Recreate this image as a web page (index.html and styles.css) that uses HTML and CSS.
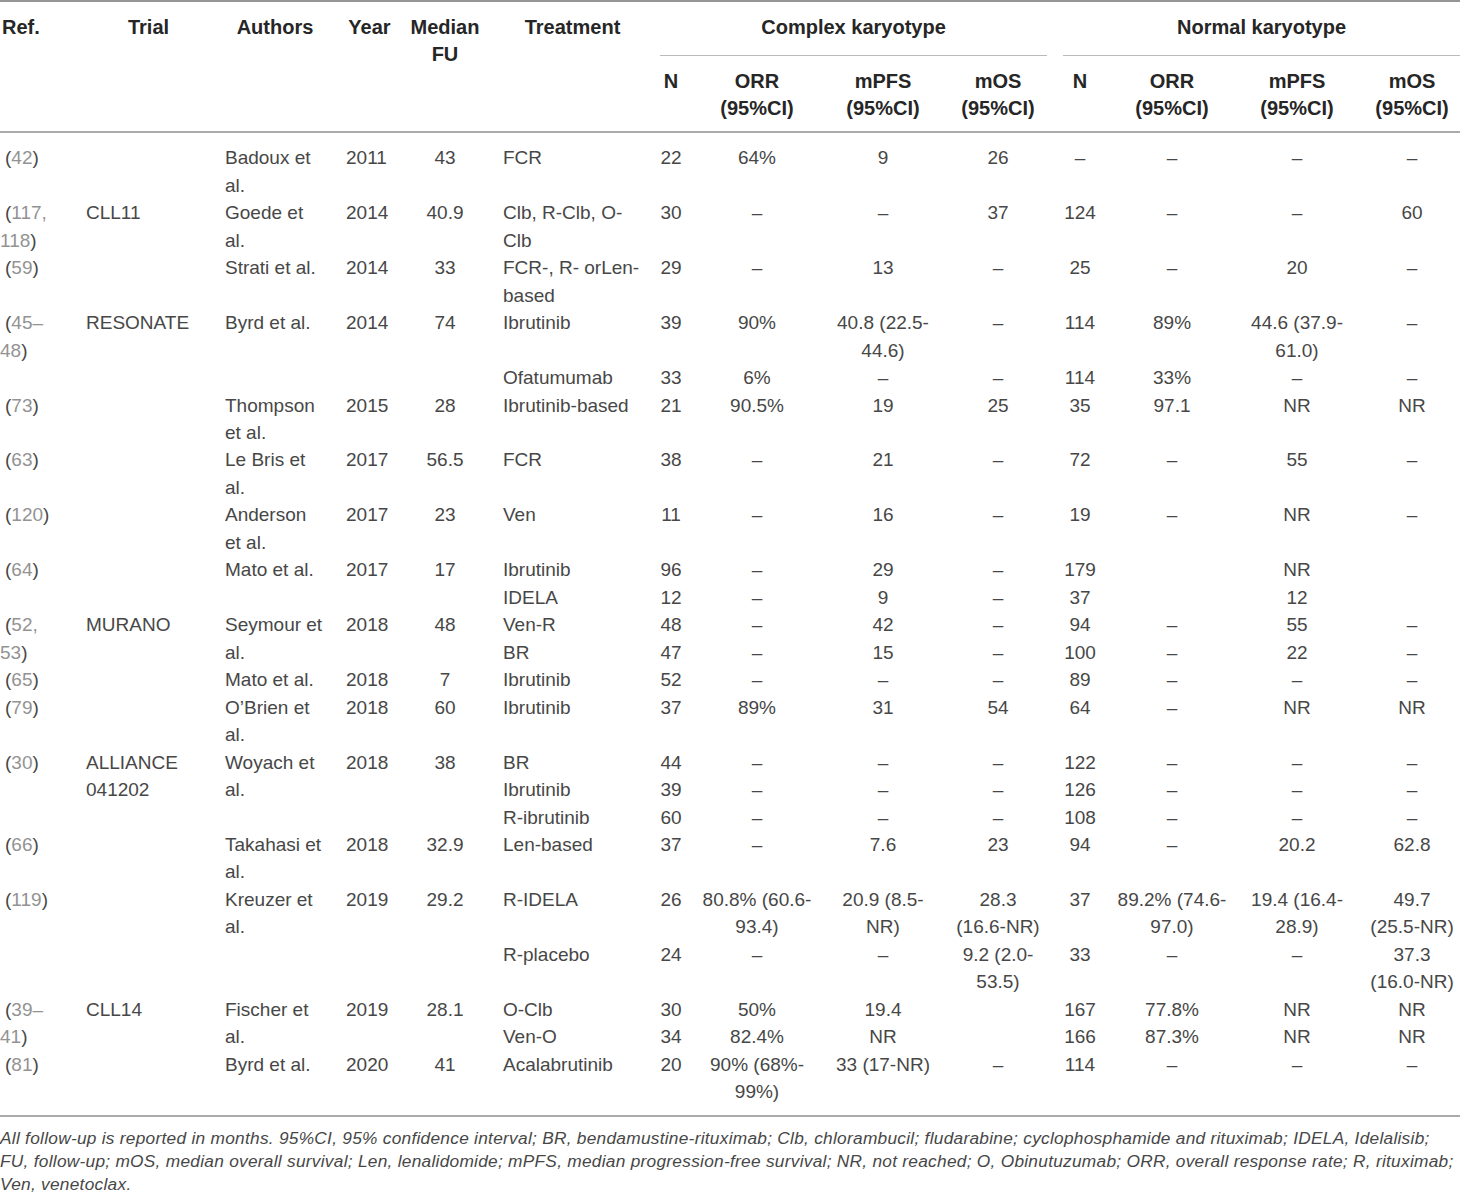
FILE: index.html
```html
<!DOCTYPE html>
<html lang="en">
<head>
<meta charset="utf-8">
<title>Complex karyotype outcomes</title>
<link rel="stylesheet" href="styles.css">
</head>
<body>
<div class="wrap">
<table class="data">
<colgroup>
<col class="w-ref"><col class="w-trial"><col class="w-auth"><col class="w-yr"><col class="w-fu"><col class="w-tx">
<col class="w-n"><col class="w-orr"><col class="w-pfs"><col class="w-os">
<col class="w-n2"><col class="w-orr2"><col class="w-pfs2"><col class="w-os2">
</colgroup>
<thead>
<tr class="h1">
<th rowspan="2" class="ref">Ref.</th>
<th rowspan="2" class="trial">Trial</th>
<th rowspan="2" class="auth">Authors</th>
<th rowspan="2" class="yr">Year</th>
<th rowspan="2">Median FU</th>
<th rowspan="2" class="tx">Treatment</th>
<th colspan="4" class="grp"><div class="grp-line cx">Complex karyotype</div></th>
<th colspan="4" class="grp"><div class="grp-line nk">Normal karyotype</div></th>
</tr>
<tr class="h2">
<th>N</th><th>ORR (95%CI)</th><th>mPFS (95%CI)</th><th class="os">mOS (95%CI)</th>
<th>N</th><th>ORR (95%CI)</th><th>mPFS (95%CI)</th><th class="os2">mOS (95%CI)</th>
</tr>
</thead>
<tbody>
<tr class="first">
<td class="ref">(<span class="lk">42</span>)</td><td class="trial"></td><td class="auth">Badoux et al.</td><td class="yr">2011</td><td>43</td><td class="tx">FCR</td>
<td>22</td><td>64%</td><td>9</td><td class="os">26</td><td>–</td><td>–</td><td>–</td><td class="os2">–</td>
</tr>
<tr>
<td class="ref">(<span class="lk">117,</span> <span class="lk">118</span>)</td><td class="trial">CLL11</td><td class="auth">Goede et al.</td><td class="yr">2014</td><td>40.9</td><td class="tx">Clb, R-Clb, O-Clb</td>
<td>30</td><td>–</td><td>–</td><td class="os">37</td><td>124</td><td>–</td><td>–</td><td class="os2">60</td>
</tr>
<tr>
<td class="ref">(<span class="lk">59</span>)</td><td class="trial"></td><td class="auth">Strati et al.</td><td class="yr">2014</td><td>33</td><td class="tx">FCR-, R- orLen-based</td>
<td>29</td><td>–</td><td>13</td><td class="os">–</td><td>25</td><td>–</td><td>20</td><td class="os2">–</td>
</tr>
<tr>
<td rowspan="2" class="ref">(<span class="lk">45–</span><wbr><span class="lk">48</span>)</td><td rowspan="2" class="trial">RESONATE</td><td rowspan="2" class="auth">Byrd et al.</td><td rowspan="2" class="yr">2014</td><td rowspan="2">74</td><td class="tx">Ibrutinib</td>
<td>39</td><td>90%</td><td>40.8 (22.5-44.6)</td><td class="os">–</td><td>114</td><td>89%</td><td>44.6 (37.9-61.0)</td><td class="os2">–</td>
</tr>
<tr>
<td class="tx">Ofatumumab</td>
<td>33</td><td>6%</td><td>–</td><td class="os">–</td><td>114</td><td>33%</td><td>–</td><td class="os2">–</td>
</tr>
<tr>
<td class="ref">(<span class="lk">73</span>)</td><td class="trial"></td><td class="auth">Thompson et al.</td><td class="yr">2015</td><td>28</td><td class="tx">Ibrutinib-based</td>
<td>21</td><td>90.5%</td><td>19</td><td class="os">25</td><td>35</td><td>97.1</td><td>NR</td><td class="os2">NR</td>
</tr>
<tr>
<td class="ref">(<span class="lk">63</span>)</td><td class="trial"></td><td class="auth">Le Bris et al.</td><td class="yr">2017</td><td>56.5</td><td class="tx">FCR</td>
<td>38</td><td>–</td><td>21</td><td class="os">–</td><td>72</td><td>–</td><td>55</td><td class="os2">–</td>
</tr>
<tr>
<td class="ref">(<span class="lk">120</span>)</td><td class="trial"></td><td class="auth">Anderson et al.</td><td class="yr">2017</td><td>23</td><td class="tx">Ven</td>
<td>11</td><td>–</td><td>16</td><td class="os">–</td><td>19</td><td>–</td><td>NR</td><td class="os2">–</td>
</tr>
<tr>
<td rowspan="2" class="ref">(<span class="lk">64</span>)</td><td rowspan="2" class="trial"></td><td rowspan="2" class="auth">Mato et al.</td><td rowspan="2" class="yr">2017</td><td rowspan="2">17</td><td class="tx">Ibrutinib</td>
<td>96</td><td>–</td><td>29</td><td class="os">–</td><td>179</td><td></td><td>NR</td><td class="os2"></td>
</tr>
<tr>
<td class="tx">IDELA</td>
<td>12</td><td>–</td><td>9</td><td class="os">–</td><td>37</td><td></td><td>12</td><td class="os2"></td>
</tr>
<tr>
<td rowspan="2" class="ref">(<span class="lk">52,</span> <span class="lk">53</span>)</td><td rowspan="2" class="trial">MURANO</td><td rowspan="2" class="auth">Seymour et al.</td><td rowspan="2" class="yr">2018</td><td rowspan="2">48</td><td class="tx">Ven-R</td>
<td>48</td><td>–</td><td>42</td><td class="os">–</td><td>94</td><td>–</td><td>55</td><td class="os2">–</td>
</tr>
<tr>
<td class="tx">BR</td>
<td>47</td><td>–</td><td>15</td><td class="os">–</td><td>100</td><td>–</td><td>22</td><td class="os2">–</td>
</tr>
<tr>
<td class="ref">(<span class="lk">65</span>)</td><td class="trial"></td><td class="auth">Mato et al.</td><td class="yr">2018</td><td>7</td><td class="tx">Ibrutinib</td>
<td>52</td><td>–</td><td>–</td><td class="os">–</td><td>89</td><td>–</td><td>–</td><td class="os2">–</td>
</tr>
<tr>
<td class="ref">(<span class="lk">79</span>)</td><td class="trial"></td><td class="auth">O’Brien et al.</td><td class="yr">2018</td><td>60</td><td class="tx">Ibrutinib</td>
<td>37</td><td>89%</td><td>31</td><td class="os">54</td><td>64</td><td>–</td><td>NR</td><td class="os2">NR</td>
</tr>
<tr>
<td rowspan="3" class="ref">(<span class="lk">30</span>)</td><td rowspan="3" class="trial">ALLIANCE 041202</td><td rowspan="3" class="auth">Woyach et al.</td><td rowspan="3" class="yr">2018</td><td rowspan="3">38</td><td class="tx">BR</td>
<td>44</td><td>–</td><td>–</td><td class="os">–</td><td>122</td><td>–</td><td>–</td><td class="os2">–</td>
</tr>
<tr>
<td class="tx">Ibrutinib</td>
<td>39</td><td>–</td><td>–</td><td class="os">–</td><td>126</td><td>–</td><td>–</td><td class="os2">–</td>
</tr>
<tr>
<td class="tx">R-ibrutinib</td>
<td>60</td><td>–</td><td>–</td><td class="os">–</td><td>108</td><td>–</td><td>–</td><td class="os2">–</td>
</tr>
<tr>
<td class="ref">(<span class="lk">66</span>)</td><td class="trial"></td><td class="auth">Takahasi et al.</td><td class="yr">2018</td><td>32.9</td><td class="tx">Len-based</td>
<td>37</td><td>–</td><td>7.6</td><td class="os">23</td><td>94</td><td>–</td><td>20.2</td><td class="os2">62.8</td>
</tr>
<tr>
<td rowspan="2" class="ref">(<span class="lk">119</span>)</td><td rowspan="2" class="trial"></td><td rowspan="2" class="auth">Kreuzer et al.</td><td rowspan="2" class="yr">2019</td><td rowspan="2">29.2</td><td class="tx">R-IDELA</td>
<td>26</td><td>80.8% (60.6-93.4)</td><td>20.9 (8.5-NR)</td><td class="os">28.3 (16.6-NR)</td><td>37</td><td>89.2% (74.6-97.0)</td><td>19.4 (16.4-28.9)</td><td class="os2">49.7 (25.5-NR)</td>
</tr>
<tr>
<td class="tx">R-placebo</td>
<td>24</td><td>–</td><td>–</td><td class="os">9.2 (2.0-53.5)</td><td>33</td><td>–</td><td>–</td><td class="os2">37.3 (16.0-NR)</td>
</tr>
<tr>
<td rowspan="2" class="ref">(<span class="lk">39–</span><wbr><span class="lk">41</span>)</td><td rowspan="2" class="trial">CLL14</td><td rowspan="2" class="auth">Fischer et al.</td><td rowspan="2" class="yr">2019</td><td rowspan="2">28.1</td><td class="tx">O-Clb</td>
<td>30</td><td>50%</td><td>19.4</td><td class="os"></td><td>167</td><td>77.8%</td><td>NR</td><td class="os2">NR</td>
</tr>
<tr>
<td class="tx">Ven-O</td>
<td>34</td><td>82.4%</td><td>NR</td><td class="os"></td><td>166</td><td>87.3%</td><td>NR</td><td class="os2">NR</td>
</tr>
<tr class="last">
<td class="ref">(<span class="lk">81</span>)</td><td class="trial"></td><td class="auth">Byrd et al.</td><td class="yr">2020</td><td>41</td><td class="tx">Acalabrutinib</td>
<td>20</td><td>90% (68%-<wbr>99%)</td><td>33 (17-NR)</td><td class="os">–</td><td>114</td><td>–</td><td>–</td><td class="os2">–</td>
</tr>
</tbody>
</table>
<div class="note">All follow-up is reported in months. 95%CI, 95% confidence interval; BR, bendamustine-rituximab; Clb, chlorambucil; fludarabine; cyclophosphamide and rituximab; IDELA, Idelalisib;<br>FU, follow-up; mOS, median overall survival; Len, lenalidomide; mPFS, median progression-free survival; NR, not reached; O, Obinutuzumab; ORR, overall response rate; R, rituximab;<br>Ven, venetoclax.</div>
</div>
</body>
</html>
```

FILE: styles.css
```css
html, body {
  margin: 0;
  padding: 0;
  background: #ffffff;
}

body {
  font-family: "Liberation Sans", Arial, sans-serif;
  color: #474747;
}

.wrap {
  width: 1460px;
  border-top: 2px solid #959595;
}

.data {
  width: 1460px;
  table-layout: fixed;
  border-collapse: separate;
  border-spacing: 0;
}

.w-ref { width: 67px; }
.w-trial { width: 151px; }
.w-auth { width: 121px; }
.w-yr { width: 61px; }
.w-fu { width: 90px; }
.w-tx { width: 159px; }
.w-n { width: 44px; }
.w-orr { width: 128px; }
.w-pfs { width: 124px; }
.w-os { width: 106px; }
.w-n2 { width: 58px; }
.w-orr2 { width: 126px; }
.w-pfs2 { width: 124px; }
.w-os2 { width: 101px; }

th, td {
  padding: 0 7px;
  text-align: center;
  vertical-align: top;
}

th {
  font-size: 20px;
  line-height: 27px;
  font-weight: bold;
  color: #262626;
}

td {
  font-size: 19px;
  line-height: 27.47px;
}

.h1 th {
  padding-top: 11.5px;
}

.h1 th[rowspan],
.h2 th {
  border-bottom: 2px solid #ababab;
}

.h2 th {
  padding-top: 12px;
  padding-bottom: 9.5px;
}

th.grp {
  padding: 11.5px 0 0;
}

.grp-line {
  padding-bottom: 14px;
  border-bottom: 1px solid #b9b9b9;
}

.grp-line.cx {
  margin: 0 4px 0 11px;
}

.grp-line.nk {
  margin: 0 0 0 12px;
}

.ref {
  padding-left: 0;
  text-align: left;
}

td.ref {
  text-indent: 5px;
}

th.ref {
  padding-left: 2px;
}

.trial {
  padding-left: 19px;
}

td.trial {
  text-align: left;
}

.auth {
  padding-right: 14px;
}

td.auth,
td.yr {
  text-align: left;
}

.tx {
  padding-left: 13px;
}

td.tx {
  text-align: left;
}

.os {
  padding-left: 9px;
  padding-right: 9px;
}

.os2 {
  padding-left: 9px;
  padding-right: 4px;
}

.lk {
  color: #939393;
}

.first td {
  padding-top: 11.3px;
}

.last td {
  padding-bottom: 9.3px;
}

.note {
  border-top: 2px solid #ababab;
  padding-top: 9.5px;
  font-size: 17.3px;
  line-height: 23px;
  letter-spacing: 0.27px;
  font-style: italic;
  color: #474747;
  white-space: nowrap;
}
```
